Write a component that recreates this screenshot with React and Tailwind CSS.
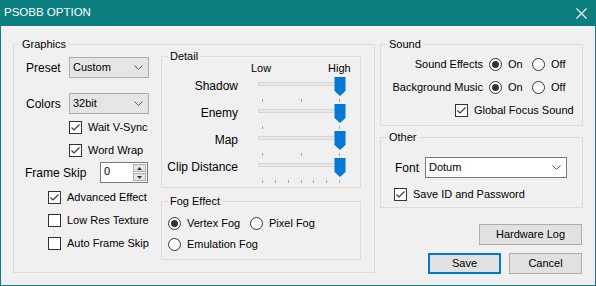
import React from 'react';

const Chevron = () => (
    <svg width="9" height="5" viewBox="0 0 9 5" className="shrink-0">
        <polyline points="0.5,0.5 4.5,4.5 8.5,0.5" fill="none" stroke="#5a5a5a" strokeWidth="1" />
    </svg>
);

const CheckBox = ({ checked }) => (
    <span className="w-[13px] h-[13px] shrink-0 border border-[#333333] bg-white flex items-center justify-center">
        {checked && (
            <svg width="11" height="11" viewBox="0 0 11 11">
                <polyline points="1.5,5.5 4,8 9.5,2.5" fill="none" stroke="#333333" strokeWidth="1.1" />
            </svg>
        )}
    </span>
);

const Radio = ({ checked }) => (
    <span className="w-[13px] h-[13px] shrink-0 rounded-full border border-[#333333] bg-white flex items-center justify-center">
        {checked && <span className="w-[7px] h-[7px] rounded-full bg-[#333333]" />}
    </span>
);

const Group = ({ title, className, children }) => (
    <fieldset className={`border border-[#dcdcdc] p-0 m-0 min-w-0 ${className}`}>
        <legend className="ml-[6px] px-[2px] leading-[12px]">{title}</legend>
        {children}
    </fieldset>
);

const Slider = ({ ticks }) => (
    <svg width="92" height="27" viewBox="0 0 92 27" className="shrink-0">
        <rect x="2.5" y="6.5" width="84" height="3" fill="#e7eaea" stroke="#d6d6d6" />
        {ticks.map((t) => (
            <line key={t} x1={t + 0.5} y1="23" x2={t + 0.5} y2="26" stroke="#a8a8a8" />
        ))}
        <path d="M78.5 1 H89.5 V15 L84 20 L78.5 15 Z" fill="#0078d7" />
    </svg>
);

const SliderRow = ({ label, ticks }) => (
    <div className="flex h-[27px]">
        <div className="w-[76px] text-right pt-[4px] leading-[13px] text-[12px] whitespace-nowrap">{label}</div>
        <div className="ml-[18px]">
            <Slider ticks={ticks} />
        </div>
    </div>
);

const CheckRow = ({ label, checked, className }) => (
    <div className={`flex items-center h-[13px] ${className}`}>
        <CheckBox checked={checked} />
        <span className="ml-[6px] leading-[13px]">{label}</span>
    </div>
);

const RadioItem = ({ label, checked, className }) => (
    <div className={`flex items-center h-[13px] ${className}`}>
        <Radio checked={checked} />
        <span className="ml-[6px] leading-[13px]">{label}</span>
    </div>
);

const DropList = ({ value }) => (
    <div className="w-[80px] h-[21px] border border-[#acacac] bg-[#e5e5e5] flex items-center justify-between pl-[3px] pr-[5px]">
        <span>{value}</span>
        <Chevron />
    </div>
);

const Button = ({ children, className }) => (
    <div className={`h-[21px] bg-[#e1e1e1] border border-[#adadad] flex items-center justify-center ${className}`}>
        {children}
    </div>
);

export default function App() {
    const three = [6, 45, 83];
    return (
        <div className="w-[596px] h-[286px] bg-[#0b7f80] flex flex-col font-['Liberation_Sans',Arial,sans-serif] text-[11px] text-black">
            <div className="h-[26px] shrink-0 flex items-center justify-between pl-[4px] pr-[9px] text-white text-[11.5px]">
                <span>PSOBB OPTION</span>
                <svg width="11" height="11" viewBox="0 0 11 11">
                    <path d="M0.5 0.5 L10.5 10.5 M10.5 0.5 L0.5 10.5" stroke="white" strokeWidth="1.1" />
                </svg>
            </div>

            <div className="flex-1 mx-px mb-px bg-[#f0f0f0] flex pt-[12px] pl-[12px]">
                <Group title="Graphics" className="w-[362px] h-[235px]">
                    <div className="flex">
                        <div className="w-[147px] flex flex-col">
                            <div className="flex items-center h-[21px] mt-[7px] pl-[12px]">
                                <span className="w-[43px] text-[12px]">Preset</span>
                                <DropList value="Custom" />
                            </div>
                            <div className="flex items-center h-[21px] mt-[15px] pl-[12px]">
                                <span className="w-[43px] text-[12px]">Colors</span>
                                <DropList value="32bit" />
                            </div>
                            <CheckRow label="Wait V-Sync" checked className="mt-[7px] pl-[55px]" />
                            <CheckRow label="Word Wrap" checked className="mt-[10px] pl-[55px]" />
                            <div className="flex items-center h-[21px] mt-[5px] pl-[11px]">
                                <span className="w-[75px] text-[12px]">Frame Skip</span>
                                <div className="w-[48px] h-[21px] border border-[#7a7a7a] bg-white flex">
                                    <span className="flex-1 pl-[3px] leading-[17px]">0</span>
                                    <div className="w-[13px] m-px flex flex-col gap-px">
                                        <div className="flex-1 bg-[#e5e5e5] border border-[#acacac] flex items-center justify-center">
                                            <svg width="5" height="3" viewBox="0 0 5 3"><path d="M0 3 L2.5 0 L5 3 Z" fill="#333" /></svg>
                                        </div>
                                        <div className="flex-1 bg-[#e5e5e5] border border-[#acacac] flex items-center justify-center">
                                            <svg width="5" height="3" viewBox="0 0 5 3"><path d="M0 0 L2.5 3 L5 0 Z" fill="#333" /></svg>
                                        </div>
                                    </div>
                                </div>
                            </div>
                            <CheckRow label="Advanced Effect" checked className="mt-[8px] pl-[34px]" />
                            <CheckRow label="Low Res Texture" className="mt-[10px] pl-[34px]" />
                            <CheckRow label="Auto Frame Skip" className="mt-[10px] pl-[34px]" />
                        </div>

                        <div className="flex flex-col">
                            <Group title="Detail" className="w-[200px] h-[138px]">
                                <div className="flex h-[13px] leading-[13px] pl-[89px]">
                                    <span className="w-[77px]">Low</span>
                                    <span>High</span>
                                </div>
                                <div className="mt-[1px]">
                                    <SliderRow label="Shadow" ticks={three} />
                                    <SliderRow label="Enemy" ticks={[6, 83]} />
                                    <SliderRow label="Map" ticks={three} />
                                    <SliderRow label="Clip Distance" ticks={[6, 19, 32, 45, 57, 70, 83]} />
                                </div>
                            </Group>
                            <Group title="Fog Effect" className="w-[200px] h-[65px] mt-[7px]">
                                <div className="flex mt-[10px] pl-[6px]">
                                    <RadioItem label="Vertex Fog" checked className="w-[82px]" />
                                    <RadioItem label="Pixel Fog" />
                                </div>
                                <RadioItem label="Emulation Fog" className="mt-[8px] pl-[6px]" />
                            </Group>
                        </div>
                    </div>
                </Group>

                <div className="ml-[5px] w-[203px] flex flex-col">
                    <Group title="Sound" className="h-[88px]">
                        <div className="flex items-center h-[13px] mt-[8px]">
                            <span className="w-[102px] text-right">Sound Effects</span>
                            <RadioItem label="On" checked className="ml-[6px] w-[43px]" />
                            <RadioItem label="Off" />
                        </div>
                        <div className="flex items-center h-[13px] mt-[10px]">
                            <span className="w-[102px] text-right">Background Music</span>
                            <RadioItem label="On" checked className="ml-[6px] w-[43px]" />
                            <RadioItem label="Off" />
                        </div>
                        <CheckRow label="Global Focus Sound" checked className="mt-[10px] pl-[74px]" />
                    </Group>
                    <Group title="Other" className="h-[77px] mt-[5px]">
                        <div className="flex items-center h-[21px] mt-[14px] pl-[14px]">
                            <span className="w-[30px] text-[12px]">Font</span>
                            <div className="w-[142px] h-[21px] border border-[#7a7a7a] bg-white flex items-center justify-between pl-[3px] pr-[5px]">
                                <span>Dotum</span>
                                <Chevron />
                            </div>
                        </div>
                        <CheckRow label="Save ID and Password" checked className="mt-[10px] pl-[13px]" />
                    </Group>
                    <div className="flex justify-end pr-[1px] mt-[16px]">
                        <Button className="w-[103px]">Hardware Log</Button>
                    </div>
                    <div className="flex justify-end gap-[8px] pr-[1px] mt-[8px]">
                        <Button className="w-[73px] !border-2 !border-[#0078d7]">Save</Button>
                        <Button className="w-[73px]">Cancel</Button>
                    </div>
                </div>
            </div>
        </div>
    );
}
